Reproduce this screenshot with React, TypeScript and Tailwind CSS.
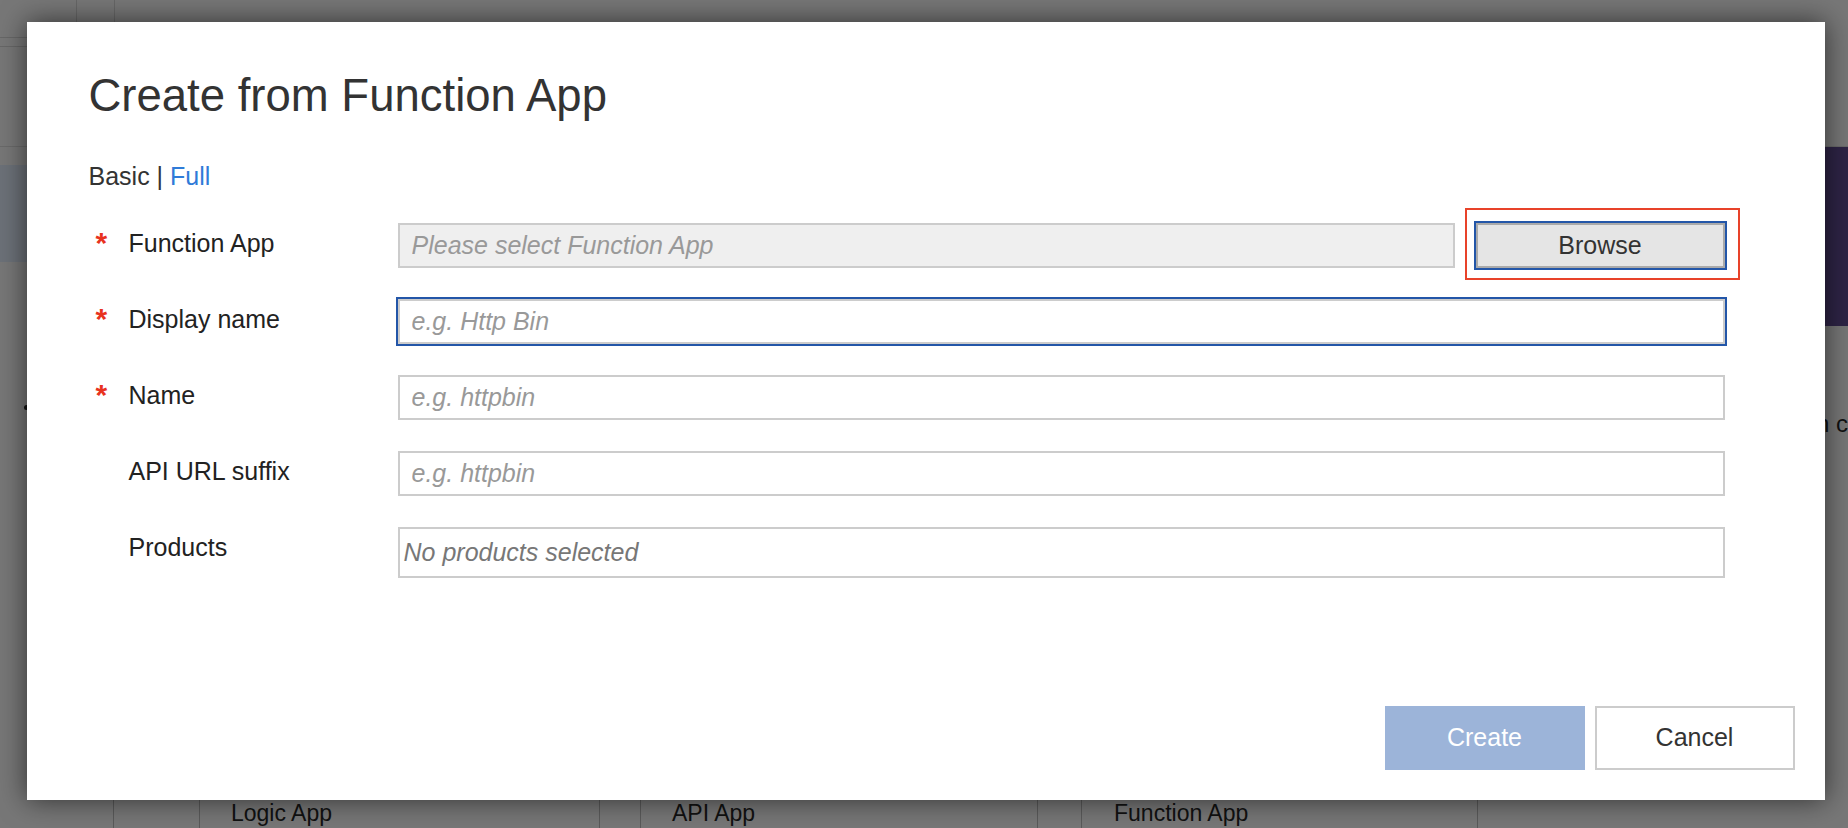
import React from 'react';

const FONT = "font-['Liberation_Sans',Arial,sans-serif]";

const Row: React.FC<{ label: string; required?: boolean; children: React.ReactNode }> = ({ label, required, children }) => (
  <div className="flex items-start pl-[69px] pr-[100px]">
    <span className="w-[33px] pt-[5px] text-[30px] leading-none font-bold text-[#e8321f]">{required ? '*' : ''}</span>
    <label className="w-[269px] pt-[8px] text-[25px] leading-none text-[#222]">{label}</label>
    <div className="flex-1 flex">{children}</div>
  </div>
);

// shared input look; background is set per field
const inputCls =
  'h-[45px] min-w-0 border-2 border-[#ccc] pl-[12px] text-[25px] text-[#333] outline-none placeholder:italic placeholder:text-[#999]';

const Background: React.FC = () => (
  <div className="absolute inset-0 flex flex-col bg-[#777]">
    <div className="h-[147px] flex border-b border-[#6a6a6a]">
      <div className="w-[77px] flex flex-col border-r border-[#676767]">
        <div className="h-[38px] border-b border-[#676767]" />
        <div className="h-[9px] border-b border-[#676767]" />
      </div>
      <div className="w-[38px] border-r border-[#676767]" />
      <div className="flex-1" />
    </div>
    <div className="h-[179px] flex justify-between">
      <div className="w-[40px] pt-[18px]">
        <div className="h-[97px] bg-[#6c7178]" />
      </div>
      <div className="w-[60px] bg-[#2e2446]" />
    </div>
    <div className="flex-1 flex justify-between">
      <div className="pl-[24px] pt-[79px]">
        <div className="h-[5px] w-[5px] rounded-full bg-[#111]" />
      </div>
      <div className="pt-[80px] text-[24px] text-[#111]">on c</div>
    </div>
    <div className="h-[28px] flex text-[23px] leading-[26px] text-[#111]">
      <div className="w-[114px] border-r border-[#5a5a5a]" />
      <div className="w-[485px] flex">
        <div className="w-[86px] border-r border-[#5a5a5a]" />
        <div className="pl-[31px]">Logic App</div>
      </div>
      <div className="w-[438px] flex border-l border-[#5a5a5a]">
        <div className="w-[41px] border-r border-[#5a5a5a]" />
        <div className="pl-[31px]">API App</div>
      </div>
      <div className="w-[440px] flex border-l border-[#5a5a5a]">
        <div className="w-[44px] border-r border-[#5a5a5a]" />
        <div className="pl-[32px]">Function App</div>
      </div>
      <div className="flex-1 border-l border-[#5a5a5a]" />
    </div>
  </div>
);

export default function App() {
  return (
    <div className={`relative w-[1848px] h-[828px] overflow-hidden ${FONT}`}>
      <Background />
      <div className="absolute inset-0 flex justify-center pt-[22px] pl-[3px]">
        <div className="w-[1798px] h-[778px] bg-white shadow-[0_0_26px_rgba(0,0,0,0.6)] flex flex-col pt-[51px]">
          <h1 className="pl-[62px] h-[46px] text-[45.5px] leading-none font-normal text-[#333]">Create from Function App</h1>
          <div className="pl-[62px] mt-[45px] text-[25px] leading-none text-[#333]">
            Basic | <a className="text-[#2f7bd8] cursor-pointer">Full</a>
          </div>

          <div className="mt-[34px] flex flex-col gap-[31px]">
            <Row label="Function App" required>
              <input
                readOnly
                placeholder="Please select Function App"
                className={`${inputCls} flex-1 bg-[#efefef]`}
              />
              <div className="relative ml-[21px] shrink-0">
                <button className="h-[45px] w-[249px] border-2 border-[#aaa] bg-[#e5e5e5] ring-2 ring-[#2356a8] text-[25px] text-[#333]">
                  Browse
                </button>
                <div className="pointer-events-none absolute -left-[11px] -right-[15px] -top-[15px] -bottom-[12px] border-2 border-[#e8432a]" />
              </div>
            </Row>
            <Row label="Display name" required>
              <input placeholder="e.g. Http Bin" className={`${inputCls} w-full bg-white ring-2 ring-[#2356a8]`} />
            </Row>
            <Row label="Name" required>
              <input placeholder="e.g. httpbin" className={`${inputCls} w-full bg-white`} />
            </Row>
            <Row label="API URL suffix">
              <input placeholder="e.g. httpbin" className={`${inputCls} w-full bg-white`} />
            </Row>
            <Row label="Products">
              <div className="h-[51px] w-full border-2 border-[#ccc] bg-white pl-[4px] flex items-center text-[25px] italic text-[#777]">
                No products selected
              </div>
            </Row>
          </div>

          <div className="mt-auto flex justify-end gap-[10px] pr-[30px] pb-[30px]">
            <button className="w-[200px] h-[64px] bg-[#9cb4d9] text-[25px] text-white">Create</button>
            <button className="w-[200px] h-[64px] border-2 border-[#ccc] bg-white text-[25px] text-[#333]">Cancel</button>
          </div>
        </div>
      </div>
    </div>
  );
}
